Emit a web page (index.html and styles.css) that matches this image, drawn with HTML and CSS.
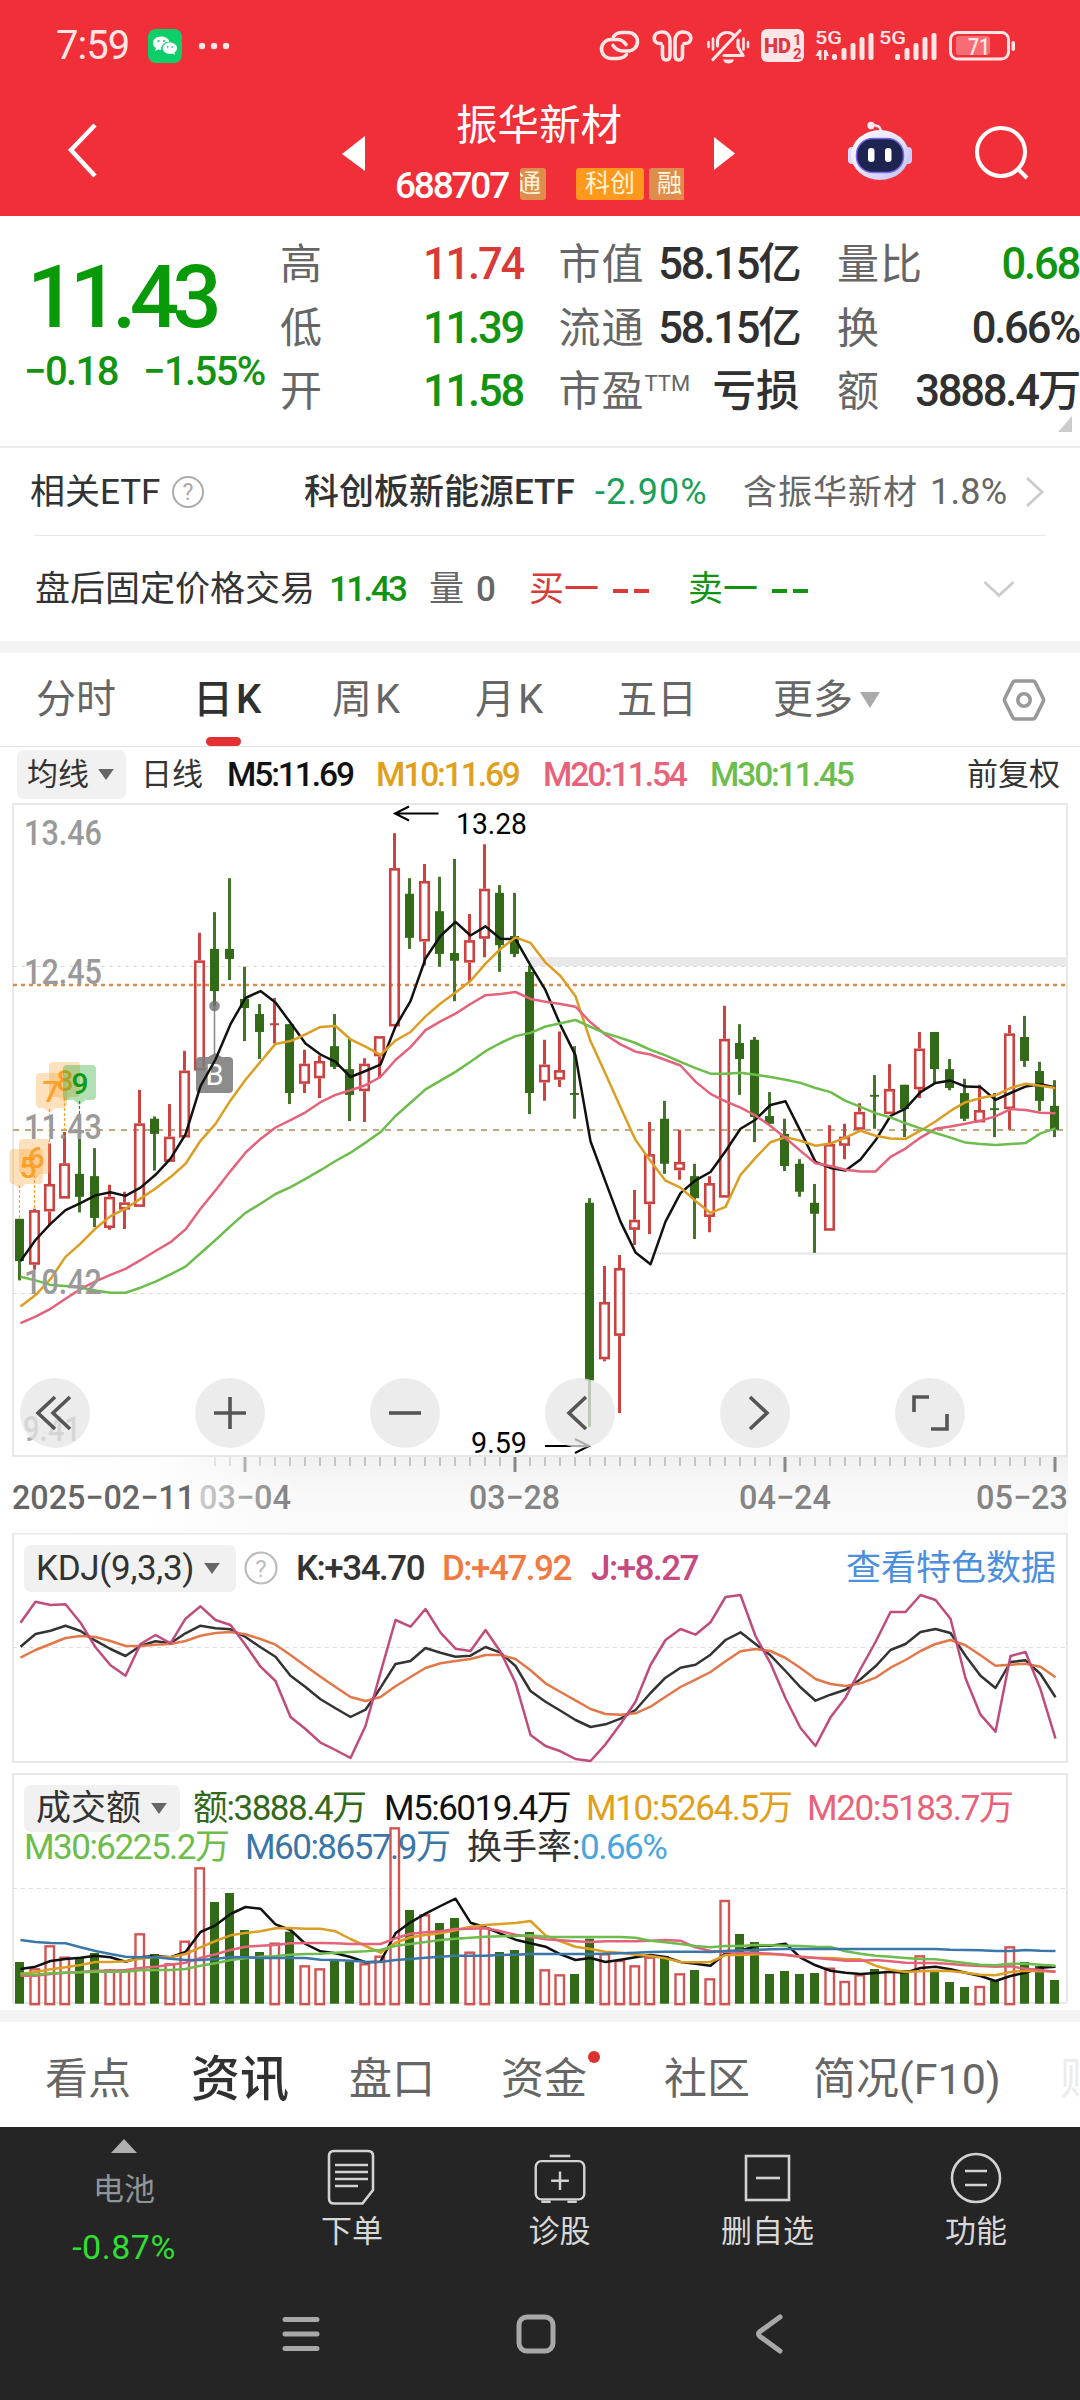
FILE: index.html
```html
<!DOCTYPE html>
<html lang="zh-CN">
<head>
<meta charset="utf-8">
<title>振华新材 688707</title>
<link rel="stylesheet" href="styles.css">
</head>
<body>
<header class="top">
  <div class="status">
    <span class="clock">7:59</span>
    <svg class="wechat" viewBox="0 0 34 34"><rect width="34" height="34" rx="8" fill="#0ccf69"/><path d="M13 7.500c-4.700 0-8 2.900-8 6.500 0 2.100 1.100 3.900 2.900 5.100l-.8 2.900 3-1.600c1 .3 1.900.4 3.200.4-.5-4.500 3.300-8 8.200-8C20.600 9.600 17.300 7.500 13 7.500z" fill="#fff"/><path d="M22 13.500c-4 0-7.200 2.500-7.200 5.700s3.200 5.700 7.200 5.700c.9 0 1.800-.1 2.600-.4l2.500 1.400-.7-2.500c1.700-1.100 2.700-2.500 2.700-4.200 0-3.200-3.200-5.700-7.100-5.700z" fill="#fff"/><g fill="#0ccf69"><circle cx="10.500" cy="12" r="1.100"/><circle cx="16" cy="12" r="1.100"/><circle cx="19.700" cy="17.800" r=".9"/><circle cx="24.200" cy="17.800" r=".9"/></g></svg>
    <svg class="dots" viewBox="0 0 32 8"><circle cx="4" cy="4" r="3.200"/><circle cx="16" cy="4" r="3.200"/><circle cx="28" cy="4" r="3.200"/></svg>
    <svg class="sysicons" viewBox="596 26 424 40">
      <g fill="none" stroke="#ffe6e6" stroke-width="3.600" stroke-linecap="round" stroke-linejoin="round">
        <path d="M613.500 36.500c2-2.700 5-4 8.500-4h6c5.500 0 9.500 4 9.500 9s-4 9.500-9.500 9.500h-5c-4.500 0-7.500-2-10-5.500"/>
        <path d="M626 44.500c-2.500-3.500-5-5-8.500-5H611c-5.500 0-9.500 4.500-9.500 9.500s4 9.500 9.500 9.500h6c4 0 7.500-1.500 9.500-4"/>
        <path d="M661 43.500c-4.500 .5-7-2-6.800-5.500.2-4 4-6 8-6 5 0 7.800 4 7.800 9v14c0 3-1 5-3.800 5s-3.700-2-3.700-5v-9"/>
        <path d="M684 43.500c4.500 .5 7-2 6.800-5.500-.2-4-4-6-8-6-5 0-7.800 4-7.800 9v14c0 3 1 5 3.800 5s3.700-2 3.700-5v-9"/>
        <path d="M717.500 46v-4c0-5.500 4-9.500 9.500-9.500 3 0 5 1 6.500 2.500M738 40v7l5 8.500H724M713 59.500l27-29" stroke-width="3.200"/>
        <path d="M708.500 42v5M713 38.500v11M743.500 38.500v11M748 42v5" stroke-width="2.600"/>
      </g>
      <path d="M723 59.500h11c-1 3-3 4-5.500 4s-4.500-1-5.500-4z" fill="#ffe6e6"/>
      <rect x="761" y="29" width="43" height="33" rx="6" fill="#ffe6e6"/>
      <text x="764" y="53" font-size="20" font-weight="900" textLength="27" lengthAdjust="spacingAndGlyphs" fill="#e03840">HD</text>
      <text x="793" y="45" font-size="15" font-weight="700" fill="#e03840">1</text>
      <text x="793" y="58.500" font-size="15" font-weight="700" fill="#e03840">2</text>
      <g fill="#ffe6e6">
        <text x="815" y="44" font-size="19" font-weight="500" textLength="27" lengthAdjust="spacingAndGlyphs">5G</text>
        <text x="879" y="44" font-size="19" font-weight="500" textLength="27" lengthAdjust="spacingAndGlyphs">5G</text>
        <path d="M819 50h2.500v10H819v-4h-3.500zM824 60h2.500v-4h2.500l-2.500-6H824z"/>
        <rect x="832" y="54" width="5" height="6" rx="2"/><rect x="841.500" y="48" width="5" height="12" rx="2"/><rect x="850.500" y="43" width="5" height="17" rx="2"/><rect x="859.500" y="37" width="5" height="23" rx="2"/><rect x="868.500" y="33" width="5" height="27" rx="2"/>
        <rect x="895" y="54" width="5" height="6" rx="2"/><rect x="904.500" y="48" width="5" height="12" rx="2"/><rect x="913.500" y="43" width="5" height="17" rx="2"/><rect x="922.500" y="37" width="5" height="23" rx="2"/><rect x="931.500" y="33" width="5" height="27" rx="2"/>
        <rect x="956" y="36" width="34" height="19" rx="3" opacity=".35"/>
        <rect x="1011.500" y="41" width="3.500" height="10" rx="1.700"/>
        <text x="968" y="54.500" font-size="24" font-weight="500" textLength="22" lengthAdjust="spacingAndGlyphs">71</text>
      </g>
      <rect x="950.500" y="32.500" width="58" height="26.500" rx="7" fill="none" stroke="#ffe6e6" stroke-width="3"/>
    </svg>
  </div>
  <div class="titlebar">
    <svg class="back" viewBox="0 0 34 58"><path d="M29 3L5 28l24 26" fill="none" stroke="#fff" stroke-width="4.500"/></svg>
    <svg class="prev" viewBox="0 0 24 36"><path d="M0 18L23 0v35z" fill="#fff"/></svg>
    <div class="name">
      <h1>振华新材</h1>
      <div class="code"><span class="num">688707</span><i class="tag cutl">通</i><i class="tag kc">科创</i><i class="tag cutr">融</i></div>
    </div>
    <svg class="next" viewBox="0 0 22 34"><path d="M21 16.500L0 0v33z" fill="#fff"/></svg>
    <svg class="robot" viewBox="0 0 64 60">
      <defs><linearGradient id="face" x1="0" y1="0" x2="1" y2="1"><stop offset="0" stop-color="#fff"/><stop offset=".55" stop-color="#e4e0fb"/><stop offset="1" stop-color="#b9bdf4"/></linearGradient></defs>
      <path d="M23 4c6 0 10 1 10 8" fill="none" stroke="#f3e6ff" stroke-width="2.500"/><circle cx="23" cy="4.500" r="3.700" fill="#fbe9f6"/>
      <rect x="0" y="26" width="9" height="17" rx="4" fill="#dcdcff"/><rect x="55" y="26" width="9" height="17" rx="4" fill="#c9ccf8"/>
      <ellipse cx="32" cy="34" rx="29" ry="25" fill="url(#face)"/>
      <rect x="8.500" y="17.500" width="47" height="34" rx="16" fill="#1d2450" stroke="#7a66e8" stroke-width="1.500"/>
      <rect x="20" y="27" width="6.500" height="14" rx="3" fill="#fff"/><rect x="37" y="27" width="6.500" height="14" rx="3" fill="#fff"/>
    </svg>
    <svg class="search" viewBox="0 0 56 56"><circle cx="26" cy="26" r="24" fill="none" stroke="#fff" stroke-width="4"/><path d="M43 43l9 9" stroke="#fff" stroke-width="4"/></svg>
  </div>
</header>

<section class="quote">
  <div class="price down">
    <div class="last">11.43</div>
    <div class="chg"><span>−0.18</span><span>−1.55%</span></div>
  </div>
  <dl class="stats">
    <div><dt>高</dt><dd class="up">11.74</dd></div><div><dt>市值</dt><dd>58.15亿</dd></div><div><dt>量比</dt><dd class="down">0.68</dd></div>
    <div><dt>低</dt><dd class="down">11.39</dd></div><div><dt>流通</dt><dd>58.15亿</dd></div><div><dt>换</dt><dd>0.66%</dd></div>
    <div><dt>开</dt><dd class="down">11.58</dd></div><div><dt>市盈<sup>TTM</sup></dt><dd class="cn">亏损</dd></div><div><dt>额</dt><dd>3888.4万</dd></div>
  </dl>
  <svg class="corner" viewBox="0 0 14 16"><path d="M14 0v16H0z" fill="#ccc"/></svg>
</section>

<section class="etf">
  <span>相关ETF</span>
  <svg class="help" viewBox="0 0 34 34"><circle cx="17" cy="17" r="15" fill="none" stroke="#aaa" stroke-width="2"/><text x="17" y="25" text-anchor="middle" font-size="23" fill="#aaa">?</text></svg>
  <span class="strong">科创板新能源ETF</span>
  <span class="pct">-2.90%</span>
  <span class="dim">含振华新材</span>
  <span class="dim w">1.8%</span>
  <svg class="chev" viewBox="0 0 20 32"><path d="M2 2l15 14L2 30" fill="none" stroke="#ccc" stroke-width="3"/></svg>
</section>

<section class="after">
  <span>盘后固定价格交易</span><b class="down num">11.43</b><span class="dim">量</span><span class="dim num md">0</span>
  <span class="up">买一</span><span class="up dash"><i></i><i></i></span><span class="down">卖一</span><span class="down dash"><i></i><i></i></span>
  <svg class="chevd" viewBox="0 0 32 18"><path d="M1.500 2L16 15.500 30.500 2" fill="none" stroke="#ccc" stroke-width="3"/></svg>
</section>
<div class="band"></div>

<nav class="periods">
  <span>分时</span><span class="on">日<em>K</em></span><span>周<em>K</em></span><span>月<em>K</em></span><span>五日</span><span>更多<svg class="tri" viewBox="0 0 20 16"><path d="M0 0h20L10 16z" fill="#aaa"/></svg></span>
  <svg class="hex" viewBox="0 0 44 42"><path d="M13 2h18q1.500 0 2.200 1.300L41 19q1 2 0 4l-7.800 15.700Q32.500 40 31 40H13q-1.500 0-2.200-1.300L3 23q-1-2 0-4l7.800-15.700Q11.500 2 13 2z" fill="none" stroke="#999" stroke-width="3.600"/><circle cx="22" cy="21" r="6.200" fill="none" stroke="#999" stroke-width="3.600"/></svg>
</nav>

<div class="malegend">
  <span class="pick">均线<svg class="tri" viewBox="0 0 20 14"><path d="M0 0h20L10 14z" fill="#666"/></svg></span>
  <span>日线</span><span class="num c5">M5:11.69</span><span class="num c10">M10:11.69</span><span class="num c20">M20:11.54</span><span class="num c30">M30:11.45</span><span>前复权</span>
</div>

<section class="kline">
  <svg id="kline" viewBox="0 802 1080 731"></svg>
  <div class="tools">
    <button aria-label="最左"><svg viewBox="0 0 70 70"><path d="M35 19L18 35l17 16M50 19L33 35l17 16"/></svg></button>
    <button aria-label="放大"><svg viewBox="0 0 70 70"><path d="M19 35h32M35 19v32"/></svg></button>
    <button aria-label="缩小"><svg viewBox="0 0 70 70"><path d="M19 35h32"/></svg></button>
    <button aria-label="向左"><svg viewBox="0 0 70 70"><path d="M41 19L24 35l17 16"/></svg></button>
    <button aria-label="向右"><svg viewBox="0 0 70 70"><path d="M30 19l17 16-17 16"/></svg></button>
    <button aria-label="全屏"><svg viewBox="0 0 70 70"><path d="M34 19H19v15M36 51h16V36"/></svg></button>
  </div>
</section>

<section class="kdj">
  <div class="legend">
    <span class="pick num">KDJ(9,3,3)<svg class="tri" viewBox="0 0 20 14"><path d="M0 0h20L10 14z" fill="#666"/></svg></span>
    <svg class="help" viewBox="0 0 34 34"><circle cx="17" cy="17" r="15.500" fill="none" stroke="#bbb" stroke-width="2.200"/><text x="17" y="25.500" text-anchor="middle" font-size="24" fill="#bbb">?</text></svg>
    <span class="num ck">K:+34.70</span><span class="num cd">D:+47.92</span><span class="num cj">J:+8.27</span><a>查看特色数据</a>
  </div>
  <svg id="kdj" viewBox="0 1533 1080 240"></svg>
</section>

<section class="vol">
  <div class="legend">
    <div class="row one"><span class="pick">成交额<svg class="tri" viewBox="0 0 20 14"><path d="M0 0h20L10 14z" fill="#666"/></svg></span>
    <span class="cv">额:3888.4万</span><span class="c5">M5:6019.4万</span><span class="c10">M10:5264.5万</span><span class="c20">M20:5183.7万</span></div>
    <div class="row two"><span class="c30">M30:6225.2万</span><span class="c60">M60:8657.9万</span><span class="ck">换手率:</span><span class="cr">0.66%</span></div>
  </div>
  <svg id="vol" viewBox="0 1773 1080 237"></svg>
</section>
<div class="band"></div>

<nav class="tabs">
  <span>看点</span><span class="on">资讯</span><span>盘口</span><span class="dot">资金</span><span>社区</span><span class="f10">简况(F10)</span><span class="fade">财务</span>
</nav>

<footer>
  <div class="actions">
    <div class="sector"><svg class="upt" viewBox="0 0 26 14"><path d="M13 0l13 14H0z" fill="#b0b0b0"/></svg><span class="s1">电池</span><span class="s2">-0.87%</span></div>
    <div><svg viewBox="0 0 56 60"><path d="M10 4h34q5 0 5 5v34L38.500 56.500H10q-5 0-5-5V9q0-5 5-5z"/><path d="M11 18h33M11 25h33M11 32h33M11 39h23"/></svg><span>下单</span></div>
    <div><svg viewBox="0 0 60 60"><rect x="4" y="13" width="52" height="41" rx="6"/><path d="M19 7.500h22M30 24v20M20.500 34h19M10 56.500h10M38 56.500h10"/></svg><span>诊股</span></div>
    <div><svg viewBox="0 0 56 60"><rect x="6" y="9" width="43" height="44"/><path d="M16 31h24"/></svg><span>删自选</span></div>
    <div><svg viewBox="0 0 56 60"><circle cx="28" cy="31" r="24"/><path d="M17 24h22M17 38h22"/></svg><span>功能</span></div>
  </div>
  <div class="sysnav">
    <svg viewBox="0 0 44 44"><path d="M5 7.500h32M5 22h32M5 36.500h32"/></svg>
    <svg viewBox="0 0 44 44"><rect x="4" y="5" width="34" height="34" rx="8"/></svg>
    <svg viewBox="0 0 44 44"><path d="M30 5L10 19.500q-3 2.500 0 5L30 39"/></svg>
  </div>
</footer>
<script src="charts.js"></script>
</body>
</html>
```
FILE: styles.css
```css
* { box-sizing: border-box; }
body { margin: 0; width: 1080px; height: 2400px; overflow: hidden; background: #fff; color: #333; font: 35px/1 "Roboto", "Noto Sans CJK SC", sans-serif; }
svg { display: block; flex: none; }
h1, dl, dd { margin: 0; }
i, em { font-style: normal; }
span, b, a, i, em, dt, dd, h1 { white-space: nowrap; }
svg text { font-family: "Roboto", "Noto Sans CJK SC", sans-serif; }
.num { letter-spacing: -1.500px; font-weight: 500; }
.up { color: #d83a38 !important; }
.down { color: #129412 !important; }
.dim { color: #666; }

.top { height: 216px; background: #f12f38; color: #fff; }
.status { height: 92px; padding-left: 56px; display: flex; align-items: center; }
.clock { width: 92px; font-size: 40px; letter-spacing: -1px; color: #ffe6e6; }
.wechat { width: 34px; height: 34px; }
.dots { width: 32px; height: 8px; margin-left: 16px; fill: #ffe6e6; }
.sysicons { width: 424px; height: 40px; margin-left: 366px; }
.titlebar { height: 124px; display: flex; align-items: flex-start; }
.back { width: 34px; height: 58px; margin: 30px 0 0 66px; }
.prev { width: 24px; height: 36px; margin: 44px 0 0 242px; }
.name { width: 292px; margin-left: 29px; padding-top: 9px; }
.name h1 { font-size: 41.500px; line-height: 50px; font-weight: 400; padding-left: 61px; }
.code { margin-top: 17px; height: 32px; display: flex; align-items: center; }
.code .num { width: 125px; padding-top: 2px; font-size: 37px; letter-spacing: -2.200px; }
.tag { height: 32px; line-height: 31px; font-size: 25px; text-align: center; border-radius: 3px; background: #df8d4d; color: #fff3d8; overflow: hidden; }
.cutl { width: 26px; display: flex; justify-content: flex-end; padding-right: 5px; }
.kc { width: 68px; margin: 0 5px 0 30px; background: #ff991e; }
.cutr { width: 35px; text-align: left; padding-left: 8px; border-radius: 3px 0 0 3px; }
.next { width: 22px; height: 34px; margin: 45px 0 0 27px; }
.robot { width: 64px; height: 60px; margin: 29px 0 0 112px; }
.search { width: 56px; height: 56px; margin: 34px 0 0 63px; }

.quote { position: relative; height: 232px; display: flex; border-bottom: 2px solid #ececec; }
.price { width: 280px; padding-left: 27px; }
.last { height: 102px; margin-top: 30px; line-height: 102px; font-size: 87px; font-weight: 500; letter-spacing: -6.800px; color: #089a08; }
.chg { display: flex; margin: -2px 0 0 -3px; line-height: 52px; font-size: 40px; letter-spacing: -1.600px; font-weight: 500; }
.chg span:first-child { width: 119px; }
.stats { width: 798px; padding-top: 17px; display: grid; grid-template-columns: 243px 239px 242px; column-gap: 37.500px; grid-auto-rows: 63.500px; line-height: 63.500px; align-content: start; }
.stats div { display: flex; justify-content: space-between; }
.stats div:nth-child(3n+2) dt { margin-left: -2px; }
.stats dt { font-size: 42px; letter-spacing: 1px; color: #666; }
.stats dd { font-size: 43.500px; letter-spacing: -2.200px; font-weight: 500; color: #303030; }
.stats dd.cn { letter-spacing: 0; }
.stats sup { font-size: 22px; line-height: 0; vertical-align: 15px; letter-spacing: 0; }
.corner { position: absolute; right: 8px; bottom: 14px; width: 14px; height: 16px; }

.etf { height: 88px; margin: 0 35px; padding-top: 1px; display: flex; align-items: center; border-bottom: 1px solid #e6e6e6; }
.etf span:first-child { margin-left: -5px; width: 141px; }
.help { width: 34px; height: 34px; }
.etf .strong { width: 291px; margin-left: 99px; font-weight: 500; }
.etf .pct { width: 149px; color: #1a9f58; font-size: 36px; letter-spacing: 1px; }
.etf .dim { width: 187px; font-size: 34px; letter-spacing: 1px; margin-left: -1px; }
.etf .w { width: 95px; letter-spacing: .3px; font-size: 36px; margin-left: 0; }
.chev { width: 20px; height: 32px; }
.after { height: 105px; padding: 1px 0 0 35px; display: grid; grid-template-columns: 294px 100px 47px 53px 84px 75px 84px 211px 32px; align-items: center; }
.after span { font-weight: 400; }
.after .md { font-weight: 500; }
.after b { font-size: 35px; font-weight: 500; letter-spacing: -2.600px; }
.dash { display: flex; gap: 6px; }
.dash i { width: 15px; height: 3.500px; background: currentColor; margin-top: 4px; }
.chevd { width: 32px; height: 18px; }
.band { height: 12px; background: #f4f4f4; }

.periods { height: 94px; padding-left: 36px; display: grid; grid-template-columns: 157px 139px 143px 142px 156px 229px 44px; align-items: center; border-bottom: 1px solid #e2e2e2; font-size: 40px; color: #666; }
.periods span { position: relative; display: flex; align-items: center; }
.periods em { margin-left: 3px; }
.periods .on { color: #303030; font-weight: 500; }
.periods .on::after { content: ""; position: absolute; left: 13px; top: 57.500px; width: 35px; height: 9px; border-radius: 5px; background: #e23033; }
.periods .tri { width: 20px; height: 16px; margin-left: 7px; }
.hex { width: 44px; height: 42px; }

.malegend { height: 55px; padding-left: 17px; display: grid; grid-template-columns: 124px 86px 149px 167px 167px 257px 100px; align-items: center; font-size: 31px; }
.malegend .num { font-size: 33.500px; letter-spacing: -2.100px; }
.pick { display: flex; align-items: center; background: #f1f1f1; border-radius: 7px; }
.pick .tri { width: 16px; height: 11px; margin-left: 10px; }
.malegend .pick { width: 109px; height: 49px; padding-left: 10px; }
.malegend .pick .tri { margin-left: 9px; }
.c5 { color: #111; } .c10 { color: #e0a01c; } .c20 { color: #e8627a; } .c30 { color: #6cbd4b; } .c60 { color: #3a76a8; }
.ck { color: #333; } .cd { color: #f07a42; } .cj { color: #c54a80; } .cv { color: #33691a; } .cr { color: #4aa6e0; }

.kline { position: relative; height: 731px; }
.kline > svg { width: 1080px; height: 731px; }
.tools { position: absolute; left: 20px; top: 576px; display: flex; gap: 105px; }
.tools button { width: 70px; height: 70px; padding: 0; border: 0; border-radius: 50%; background: rgba(230, 230, 230, .75); }
.tools path { fill: none; stroke: #555; stroke-width: 3.600px; }

.kdj, .vol { display: grid; }
.kdj > *, .vol > * { grid-area: 1 / 1; }
.kdj { height: 240px; }
.kdj > svg { width: 1080px; height: 240px; }
.kdj .legend { height: 48px; margin-top: 11px; padding-left: 24px; display: grid; grid-template-columns: 220px 52px 146px 149px 255px 220px; align-items: center; }
.kdj .pick { width: 212px; height: 47px; padding-left: 12px; letter-spacing: -.300px; font-weight: 400; }
.kdj .ck, .kdj .cd, .kdj .cj { font-size: 35px; letter-spacing: -1.500px; }
.kdj a { color: #4b8fdd; }
.vol { height: 237px; }
.vol > svg { width: 1080px; height: 237px; z-index: 1; }
.vol .row { height: 39px; display: grid; grid-template-rows: 39px; align-items: center; letter-spacing: -1.500px; }
.vol .legend { padding-top: 16px; }
.vol .one { padding-left: 24px; grid-template-columns: 169px 191px 202px 221px 220px; }
.vol .two { padding-left: 24px; grid-template-columns: 221px 222px 113px 100px; }
.vol .ck { letter-spacing: 0; }
.vol .c10, .vol .c20 { letter-spacing: -1.400px; }
.vol .pick { width: 156px; height: 47px; padding-left: 12px; letter-spacing: 0; }

.tabs { height: 105px; padding: 10px 0 0 45px; display: grid; grid-template-columns: 146px 158px 152px 163px 149px 247px 60px; align-items: center; font-size: 43px; color: #666; overflow: hidden; }
.tabs .on { font-size: 49px; font-weight: 500; color: #303030; }
.dot { position: relative; }
.dot::after { content: ""; position: absolute; left: 87px; top: -7px; width: 12px; height: 12px; border-radius: 50%; background: #dc2f2f; }
.fade { color: #ececec; }

footer { height: 273px; background: #252525; }
.actions { height: 163px; display: grid; grid-template-columns: 248px 208px 207px 209px 208px; font-size: 31px; color: #d8d8d8; }
.actions > div { display: flex; flex-direction: column; align-items: center; }
.actions svg { width: 56px; height: 60px; margin-top: 20px; fill: none; stroke: #d2d2d2; stroke-width: 2.600px; }
.actions span { line-height: 44px; margin-top: 3px; }
.actions .upt { width: 26px; height: 14px; margin-top: 12px; stroke: none; }
.actions .s1 { margin-top: 15px; color: #8e9598; }
.actions .s2 { margin-top: 13px; font-size: 34px; letter-spacing: .5px; color: #2fdf33; }
.sysnav { height: 88px; padding-left: 280px; display: flex; gap: 191px; align-items: center; }
.sysnav svg { width: 44px; height: 44px; fill: none; stroke: #a8a8a8; stroke-width: 5px; stroke-linecap: round; }
```
FILE: charts.js
```js
// Sessions are 15px apart; every series has one value per session.
const STEP = 15;
const bx = i => 19.5 + STEP * i;
const lx = i => 20.5 + STEP * i;
const py = v => 790 + v / 2.178;   // price panel units
const sy = v => 1510 + v / 3;      // sub panel units
const RED = '#cb4240', GREEN = '#336a17';

const line = (vals, y, color, w = 2.5) =>
  `<polyline fill="none" stroke="${color}" stroke-width="${w}" stroke-linejoin="round" points="${vals.map((v, i) => lx(i) + ',' + y(v).toFixed(1)).join(' ')}"/>`;
const rule = (y, color, w, dash, x1 = 13, x2 = 1066) =>
  `<line x1="${x1}" x2="${x2}" y1="${y}" y2="${y}" stroke="${color}" stroke-width="${w}"${dash ? ` stroke-dasharray="${dash}"` : ''}/>`;
const label = (x, y, s, size, w, color, extra = '') =>
  `<text x="${x}" y="${y}" font-size="${size}" fill="${color}" textLength="${w}" lengthAdjust="spacingAndGlyphs" ${extra}>${s}</text>`;

// direction, high, body top, body bottom, low
const candles = `G 934 934 1026 1068|R 912 915 1034 1045|R 770 858 918 948|R 745 813 890 890|G 760 836 886 920|G 780 841 932 952|R 860 886 954 958|R 875 898 914 956|R 653 726 908 908|G 711 716 749 829|R 684 755 810 810|R 568 611 757 757|R 311 371 611 611|G 266 346 438 470|G 192 346 368 414|G 385 455 475 547|G 466 488 527 586|R 453 508 512 552|G 510 510 660 684|R 566 596 640 660|R 578 590 628 671|G 488 558 603 608|G 541 608 664 721|R 584 596 656 723|R 536 536 580 628|R 94 170 515 515|G 192 226 322 346|R 161 198 330 382|G 189 264 357 385|G 150 355 372 460|R 270 327 376 418|R 118 215 324 364|G 207 224 338 396|G 224 318 357 364|G 382 396 660 706|R 544 598 637 677|R 526 610 631 647|G 558 660 664 716|G 889 899 1286 1387|R 1037 1115 1240 1244|R 1013 1041 1189 1357|R 871 936 958 991|R 723 793 902 967|G 677 716 814 836|R 740 810 828 849|G 814 841 889 978|R 841 856 930 963|R 470 542 888 888|G 510 551 586 664|G 538 544 712 767|G 658 710 727 727|G 716 749 819 830|G 804 814 875 886|G 858 899 923 1008|R 730 771 960 960|R 727 755 775 804|R 682 701 740 745|G 621 664 668 738|R 597 651 706 706|G 642 642 695 756|R 527 563 652 671|G 527 527 608 638|G 586 608 649 654|G 629 660 716 721|R 642 697 724 724|G 660 693 697 756|R 512 530 695 740|G 492 538 590 603|G 592 612 677 699|G 632 688 740 756`
  .split('|').map(s => s.split(' ').map((v, i) => i ? +v : v));

const ma5 = [1026,980,945,915,900,883,876,884,866,838,803,750,645,587,510,453,438,463,507,552,576,592,625,612,598,515,460,367,318,287,317,297,324,325,382,436,512,578,765,853,940,1007,1033,940,878,850,832,787,738,718,686,678,743,810,823,829,805,763,710,694,658,638,633,646,647,675,660,646,641,648];
const ma10 = [1125,1100,1065,1017,988,955,928,912,890,868,843,814,764,727,676,631,592,553,547,532,516,514,543,559,577,546,527,493,465,441,416,378,346,321,333,376,405,449,547,618,691,762,808,851,866,895,921,908,838,801,767,756,764,775,770,757,742,753,759,760,742,722,699,680,671,665,649,640,644,649];
const ma20 = [1161,1147,1130,1108,1087,1070,1056,1043,1024,1004,985,957,912,872,830,790,760,735,719,702,680,664,654,643,625,588,560,523,504,487,466,447,444,440,455,461,466,472,506,533,554,570,576,588,600,635,662,678,692,709,732,758,786,813,819,827,831,831,799,781,757,738,733,727,720,711,695,697,703,704];
const ma30 = [1060,1068,1078,1080,1084,1090,1095,1095,1084,1071,1055,1038,1009,980,950,921,901,880,865,847,828,808,790,768,745,710,681,652,633,614,592,569,551,536,529,515,508,501,516,530,540,551,566,578,592,606,618,618,616,620,625,631,638,649,658,677,690,704,713,726,737,747,757,768,771,773,771,769,748,737];

function drawCandle([dir, hi, top, bot, lo], i) {
  const x = bx(i), y1 = py(top), y2 = py(bot);
  if (dir === 'G') {
    return `<path d="M${x} ${py(hi)}V${py(lo)}" stroke="#42742c" stroke-width="3"/><rect x="${x - 4.5}" y="${y1}" width="9" height="${y2 - y1}" fill="${GREEN}"/>`;
  }
  const h = y2 - y1;
  const body = h < 3
    ? `<rect x="${x - 4.5}" y="${y1}" width="9" height="2" fill="${RED}"/>`
    : `<rect x="${x - 4.25}" y="${y1 + 1.3}" width="8.500" height="${h - 2.6}" fill="none" stroke="${RED}" stroke-width="2.600"/>`;
  const wick = h < 3 ? `M${x} ${py(hi)}V${py(lo)}` : `M${x} ${py(hi)}V${y1}M${x} ${y2}V${py(lo)}`;
  return `<path d="${wick}" stroke="${RED}" stroke-width="3"/>${body}`;
}

const badge = (x, y, w, cx, n, bg, fg, tx, foot) =>
  `<path d="M${cx} ${y + 36}V${foot}" stroke="${fg}" stroke-width="1.2" stroke-dasharray="3 2"/>
   <path d="M${x + 4} ${y}h${w - 8}q4 0 4 4v27q0 4 -4 4H${cx + 6}l-6 5l-6 -5H${Math.min(x + 4, cx - 6)}q-4 0 -4 -4V${y + 4}q0 -4 4 -4z" fill="${bg}"/>
   <text x="${tx}" y="${y + 29}" text-anchor="middle" font-size="30" font-weight="500" fill="${fg}">${n}</text>`;

let k = `<defs>
  <linearGradient id="strip" x1="0" y1="0" x2="0" y2="1"><stop offset="0" stop-color="#f0f0f0"/><stop offset=".5" stop-color="#f9f9f9"/><stop offset="1" stop-color="#fafafa"/></linearGradient>
  <linearGradient id="veil"><stop offset="0" stop-color="#fff"/><stop offset=".5" stop-color="#fff" stop-opacity=".9"/><stop offset="1" stop-color="#fff" stop-opacity="0"/></linearGradient></defs>
  <rect x="12" y="1456" width="1056" height="77" fill="url(#strip)"/>`;
for (let i = 13; i < 70; i++) {
  const major = (i - 15) % 18 === 0;
  k += `<line x1="${lx(i) - .5}" x2="${lx(i) - .5}" y1="1457" y2="${major ? 1472 : 1466}" stroke="${major ? '#888' : '#c4c4c4'}" stroke-width="${major ? 3 : 2}"/>`;
}
k += label(199, 1509, '03−04', 34, 92, '#777', 'font-weight="500"');
k += `<rect x="12" y="1457" width="290" height="76" fill="url(#veil)"/>`;
k += label(12, 1509, '2025−02−11', 34, 183, '#666', 'font-weight="500"');
k += label(469, 1509, '03−28', 34, 91, '#848484', 'font-weight="500"');
k += label(739, 1509, '04−24', 34, 92, '#848484', 'font-weight="500"');
k += label(976, 1509, '05−23', 34, 92, '#848484', 'font-weight="500"');
k += `<rect x="13" y="804" width="1054" height="652" fill="none" stroke="#e8e8e8" stroke-width="2"/>`;
k += `<rect x="530" y="957" width="538" height="9" fill="#e9e9e9"/>`;
k += rule(966.5, '#dcdcdc', 1, '4 4') + rule(1293.5, '#dcdcdc', 1, '4 4') + rule(1253.5, '#e6e6e6', 2, '', 648, 1067);
k += rule(985, '#dd8a48', 2.4, '4 4') + rule(1130, '#bfa880', 2, '6 6');
k += candles.map(drawCandle).join('');
k += `<path d="M214.500 1006V1056" stroke="#888" stroke-width="1.500"/><circle cx="214.500" cy="1006" r="5.300" fill="#707070" opacity=".8"/>
  <path d="M200 1057h8l7 -4l7 4h7q4 0 4 4v28q0 4 -4 4h-29q-4 0 -4 -4v-28q0 -4 4 -4z" fill="#7c7c7c" opacity=".88"/>
  <text x="214.500" y="1085" text-anchor="middle" font-size="29" fill="#fff">B</text>`;
k += line(ma5, py, '#111') + line(ma10, py, '#dc9e22') + line(ma20, py, '#e4627a') + line(ma30, py, '#6cbd4b');
k += badge(19, 1139, 31, 34.5, 6, 'rgba(250,170,70,.36)', '#fba026', 36, 1208);
k += badge(12, 1149, 31, 19.5, 5, 'rgba(250,170,70,.36)', '#fba026', 28, 1218);
k += badge(36, 1073, 31, 49.5, 7, 'rgba(250,170,70,.36)', '#fba026', 51, 1142);
k += badge(49, 1062, 31, 64.5, 8, 'rgba(250,170,70,.36)', '#fba026', 65, 1132);
k += badge(63, 1065, 33, 79.5, 9, 'rgba(40,170,50,.36)', '#129a12', 80, 1140);
[['13.46', 845], ['12.45', 984], ['11.43', 1139], ['10.42', 1293.500]].forEach(([s, y]) => { k += label(24, y, s, 35, 78, '#9a9a9a', 'font-weight="500"'); });
k += label(23, 1441, '9.41', 35, 58, '#a8a8a8', 'font-weight="500"');
k += label(456, 833.500, '13.28', 30, 71, '#000') + label(471, 1453, '9.59', 30, 56, '#000');
k += `<path d="M438.500 813.500H395M409 806.500l-14 7l14 7M545 1446H589M575 1439l14 7l-14 7" fill="none" stroke="#000" stroke-width="2"/>`;
document.getElementById('kline').innerHTML = k;

const K = [410,372,362,347,363,392,417,438,407,394,400,370,347,355,358,381,412,440,497,531,568,595,621,599,533,462,453,414,428,440,437,411,428,468,543,575,602,630,651,643,626,600,549,503,473,464,434,390,367,402,436,483,532,572,554,539,508,469,420,402,366,357,369,437,497,534,456,451,492,562];
const D = [443,420,402,384,378,381,393,408,408,404,402,393,377,369,366,373,387,404,435,468,500,531,561,573,561,529,501,474,460,453,447,435,435,447,481,520,546,571,597,612,614,610,590,560,531,509,486,454,424,417,423,444,474,507,522,528,520,503,473,450,423,402,390,406,436,467,464,461,470,502];
const J = [338,275,285,283,338,412,466,497,402,375,400,326,289,330,345,405,470,513,621,657,698,720,744,648,488,330,350,297,368,416,423,360,425,518,675,708,724,747,753,703,642,575,465,390,357,374,337,261,255,378,460,565,654,708,622,563,477,396,306,306,255,270,326,505,614,665,438,426,538,686];
document.getElementById('kdj').innerHTML =
  `<rect x="13" y="1533.500" width="1054" height="228.500" fill="none" stroke="#e8e8e8" stroke-width="2"/>` + rule(1647.5, '#dcdcdc', 1, '4 4') +
  line(K, sy, '#333') + line(D, sy, '#e2784a') + line(J, sy, '#c04c7c');

const bars = 'G1356 R1375 R1306 R1340 G1343 G1329 R1378 R1378 R1270 G1332 R1360 R1292 R1072 G1176 G1149 G1260 G1326 R1298 G1265 R1366 R1375 G1353 G1355 R1360 R1337 R952 G1200 R1213 G1239 G1224 R1325 R1252 G1326 G1320 G1266 R1378 R1393 G1392 G1286 R1330 R1350 R1366 R1340 G1338 R1390 G1380 R1405 R1170 G1272 G1296 G1392 G1383 G1392 G1389 R1373 R1413 R1393 G1377 R1383 G1380 R1336 G1380 G1416 G1431 R1428 G1412 R1309 G1356 G1368 G1410'.split(' ');
const v5 = [1377,1370,1353,1347,1343,1337,1342,1355,1342,1338,1342,1326,1266,1246,1212,1191,1196,1243,1260,1302,1324,1330,1341,1357,1355,1270,1237,1211,1188,1166,1238,1252,1271,1289,1300,1310,1333,1350,1344,1356,1349,1342,1335,1341,1356,1361,1367,1330,1322,1308,1307,1301,1343,1366,1382,1388,1392,1389,1385,1388,1374,1370,1378,1388,1398,1413,1398,1388,1373,1370];
const v10 = [1392,1386,1378,1372,1365,1356,1356,1354,1346,1340,1342,1332,1312,1293,1276,1269,1264,1255,1254,1256,1256,1264,1287,1308,1328,1298,1282,1275,1270,1261,1250,1245,1242,1239,1233,1276,1294,1310,1317,1325,1328,1334,1338,1345,1356,1357,1356,1335,1335,1333,1332,1335,1340,1343,1344,1347,1348,1367,1379,1386,1384,1382,1383,1388,1394,1396,1386,1382,1384,1384];
const v20 = [1397,1397,1392,1388,1386,1382,1382,1380,1374,1370,1364,1358,1344,1333,1320,1310,1307,1305,1300,1299,1299,1300,1302,1302,1302,1285,1271,1267,1264,1257,1256,1254,1264,1274,1280,1288,1291,1294,1296,1294,1294,1294,1292,1290,1292,1312,1323,1326,1328,1328,1331,1334,1340,1344,1348,1352,1352,1350,1354,1358,1359,1359,1362,1366,1368,1370,1369,1376,1380,1386];
const v30 = [1391,1394,1390,1388,1387,1385,1385,1385,1381,1380,1380,1377,1367,1360,1350,1345,1340,1338,1334,1332,1331,1328,1326,1324,1320,1307,1302,1296,1290,1286,1283,1280,1279,1278,1276,1280,1281,1281,1281,1281,1281,1283,1292,1297,1302,1308,1312,1308,1308,1305,1306,1307,1308,1310,1311,1324,1331,1337,1340,1344,1347,1348,1354,1359,1364,1366,1361,1361,1364,1367];
const v60 = [1290,1296,1299,1300,1312,1323,1332,1340,1342,1342,1346,1350,1350,1347,1341,1342,1344,1344,1344,1344,1349,1350,1352,1355,1356,1350,1347,1343,1340,1337,1337,1337,1335,1334,1332,1332,1332,1332,1332,1331,1330,1328,1326,1325,1325,1325,1326,1323,1321,1320,1318,1317,1317,1317,1317,1317,1317,1317,1317,1317,1317,1317,1319,1320,1321,1323,1323,1320,1322,1323];
document.getElementById('vol').innerHTML =
  `<path d="M13 2003V1774H1067V2003" fill="none" stroke="#e8e8e8" stroke-width="2"/>` + rule(2003, '#e8e8e8', 2) + rule(1888.5, '#dcdcdc', 1, '4 4') +
  bars.map((b, i) => {
    const y = sy(+b.slice(1)), x = bx(i);
    return b[0] === 'G'
      ? `<rect x="${x - 4.5}" y="${y}" width="9" height="${2003.7 - y}" fill="${GREEN}"/>`
      : `<rect x="${x - 4}" y="${y + 1}" width="8.500" height="${2003.2 - y}" fill="none" stroke="${RED}" stroke-opacity=".9" stroke-width="2.400"/>`;
  }).join('') +
  line(v5, sy, '#111') + line(v10, sy, '#dc9e22') + line(v20, sy, '#e4627a') + line(v30, sy, '#6cbd4b') + line(v60, sy, '#3a76a8');
```
